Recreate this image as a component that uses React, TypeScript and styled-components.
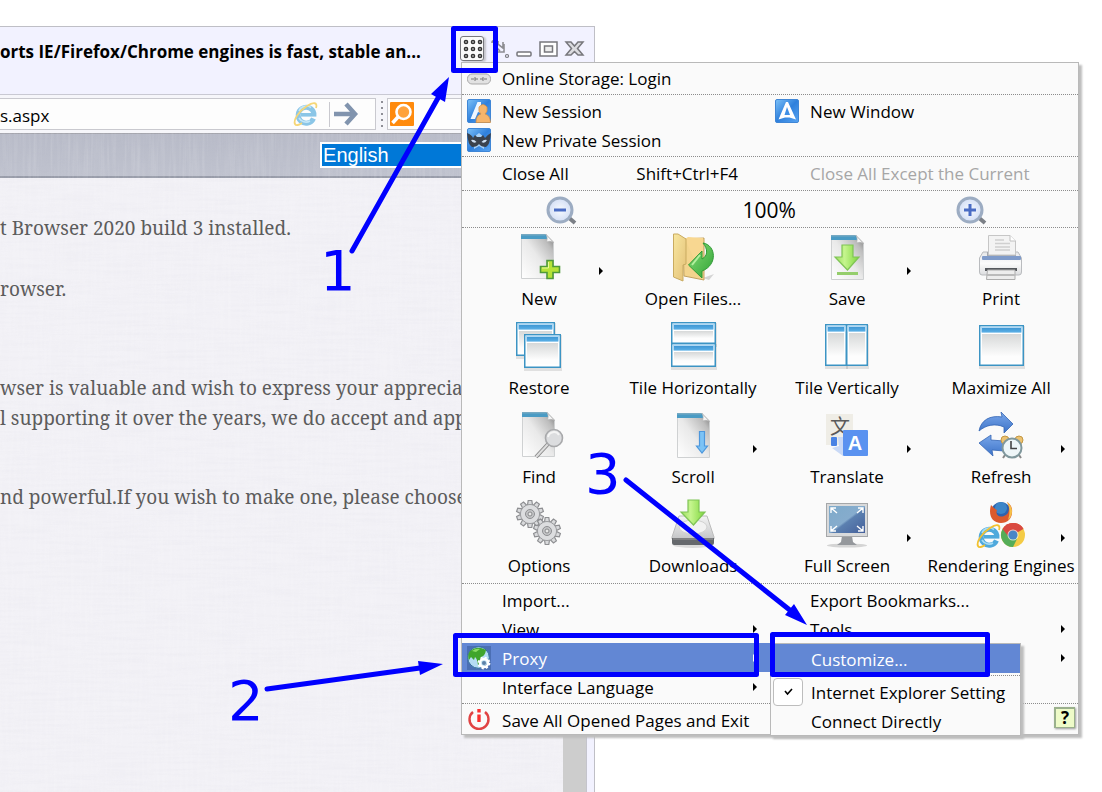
import React from "react";
import styled, { createGlobalStyle, css } from "styled-components";

const GlobalStyle = createGlobalStyle`
  *, *::before, *::after { box-sizing: border-box; }
  body { margin: 0; background: #fff; color: #000; font-family: "Open Sans", "Noto Sans", sans-serif; }
  button { font: inherit; color: inherit; background: none; border: 0; padding: 0; margin: 0; text-align: left; }
  ul { list-style: none; margin: 0; padding: 0; }
  svg { display: block; flex: none; overflow: visible; }
`;

/* ---------- page ---------- */

const Page = styled.div`
  min-height: 100vh;
  padding-top: 26px;
  overflow: hidden;
  display: flex;
`;

const BrowserWindow = styled.div`
  position: relative;
  width: 54%;
  display: flex;
  flex-direction: column;
  border: 1px solid #bfbfc6;
  border-width: 1px 1px 0 0;
  background: #f2f2ff;
`;

const TitleBar = styled.header`
  display: flex;
  align-items: center;
  height: 67px;
  padding: 0 10px 18px 0;
`;

const Title = styled.h1`
  flex: 1;
  margin: 0;
  font-size: 17px;
  line-height: 24px;
  font-weight: 700;
  white-space: nowrap;
`;

const WindowControls = styled.div`
  display: flex;
  align-items: center;
  gap: 7px;
  padding-bottom: 6px;
`;

const GridButton = styled.button`
  width: 24px;
  height: 25px;
  border: 1px solid #77777d;
  border-radius: 3px;
  background: #fafafa;
  box-shadow: 2px 1px 2px #c4c4cc;
`;

const Toolbar = styled.div`
  display: flex;
  align-items: center;
  height: 39px;
  margin-right: 7px;
  border-top: 1px solid #c9c9d3;
  background: #f6f6fa;
`;

const AddressBar = styled.div`
  display: flex;
  align-items: center;
  flex: 0 0 376px;
  height: 32px;
  padding-right: 17px;
  border: 1px solid #c9c9cf;
  border-left: 0;
  background: #fdfdfd;
`;

const AddressInput = styled.input`
  flex: 1;
  min-width: 0;
  border: 0;
  padding: 3px 0 0;
  background: none;
  font: inherit;
  font-size: 17px;
  line-height: 24px;
`;

const Divider = styled.span`
  width: 1px;
  height: 25px;
  margin: 0 4px 0 11px;
  background: #c9c9cf;
`;

const Grip = styled.span`
  width: 2px;
  height: 26px;
  margin: 0 4px 0 5px;
  background: repeating-linear-gradient(#8f8f96 0 2px, transparent 2px 6px);
`;

const SearchBox = styled.div`
  flex: 1;
  height: 32px;
  padding: 3px 2px;
  border: 1px solid #c9c9cf;
  background: #fdfdfd;
`;

const Viewport = styled.div`
  flex: 1;
  display: flex;
  min-height: 0;
  margin-right: 7px;
  border-right: 1px solid #c4c4cc;
`;

const WebPage = styled.main`
  position: relative;
  flex: 1;
  min-width: 0;
  overflow: hidden;
  background-color: #f2f1f6;
`;

/* linen texture that covers the whole page behind its text */
const Linen = styled.svg`
  position: absolute;
  inset: 0;
  pointer-events: none;
`;

const Scrollbar = styled.div`
  flex: 0 0 23px;
  background: #cdcdcd;
`;

const Banner = styled.div`
  display: flex;
  justify-content: flex-end;
  height: 45px;
  padding: 8px 0;
  background: linear-gradient(#b8bbc8, #bfc2ce);
  border-top: 1px solid #a4a5ad;
  border-bottom: 2px solid #989ca9;
`;

const LanguageSelect = styled.select`
  position: relative;
  z-index: 1;
  flex: 0 0 243px;
  height: 26px;
  padding: 0 0 0 1px;
  appearance: none;
  border: 2px solid #fff;
  border-radius: 0;
  background: #0078d7;
  color: #fff;
  font-family: "Liberation Sans", Arial, sans-serif;
  font-size: 20px;
  line-height: 22px;
`;

const Article = styled.article`
  position: relative;
  padding-top: 35px;
  color: #5c5c5c;
  font-family: "Noto Serif", "DejaVu Serif Condensed", "DejaVu Serif", serif;
  font-size: 19px;
  line-height: 30px;
  white-space: nowrap;
`;

const Paragraph = styled.p<{ $gap: number }>`
  margin: 0 0 ${(p) => p.$gap}px;
`;

/* ---------- menu ---------- */

const MenuPanel = styled.nav`
  position: absolute;
  z-index: 1;
  top: 35px;
  left: calc(100% - 133px);
  border: 1px solid #b9b9b9;
  background: #fafafa;
  box-shadow: 3px 3px 2px #bdbdbd;
  font-size: 17px;
  line-height: 24px;
  white-space: nowrap;
`;

const Section = styled.ul<{ $pad?: string; $last?: boolean }>`
  display: grid;
  grid-template-columns: repeat(2, minmax(308px, 1fr));
  padding: ${(p) => p.$pad ?? "1px 0 2px"};
  border-bottom: ${(p) => (p.$last ? "0" : "1px dotted #8c8c8c")};
`;

const Cell = styled.li<{ $start?: boolean }>`
  position: relative;
  ${(p) => p.$start && css`grid-column: 1;`}
`;

const Row = styled.button<{ $active?: boolean }>`
  display: flex;
  align-items: center;
  width: 100%;
  height: 29px;
  padding: 0 13px 0 5px;
  background: ${(p) => (p.$active ? "#6287d4" : "transparent")};
  color: ${(p) => (p.$active ? "#fff" : "#000")};
  &:disabled { color: #a6a6a6; }
`;

const RowIcon = styled.span`
  flex: 0 0 35px;
  display: flex;
`;

const RowLabel = styled.span`
  flex: 1;
  padding-top: 2px;
`;

const Shortcut = styled.span`
  padding: 2px 19px 0 0;
`;

const Triangle = styled.span<{ $light?: boolean }>`
  border: 4px solid transparent;
  border-left: 4px solid ${(p) => (p.$light ? "#fff" : "#000")};
  border-right: 0;
`;

const ZoomRow = styled.div`
  display: flex;
  justify-content: space-between;
  align-items: center;
  height: 37px;
  padding: 2px 92px 0 84px;
  border-bottom: 1px dotted #8c8c8c;
  font-size: 21px;
`;

const ZoomLevel = styled.span`
  padding-left: 6px;
`;

const TileGrid = styled.ul`
  display: grid;
  grid-template-columns: repeat(4, minmax(154px, 1fr));
  grid-template-rows: repeat(3, 89px) 88px;
  border-bottom: 1px dotted #8c8c8c;
`;

const TileCell = styled.li`
  position: relative;
`;

const Tile = styled.button`
  display: flex;
  flex-direction: column;
  align-items: center;
  gap: 5px;
  width: 100%;
  padding-top: 6px;
`;

const TileArrow = styled(Triangle)`
  position: absolute;
  top: 39px;
  right: 13px;
`;

const HelpButton = styled.button`
  width: 21px;
  height: 21px;
  margin: 2px 3px 0 auto;
  display: block;
  border: 1px solid #9ab08c;
  border-width: 2px 1px 1px 2px;
  background: #eefbc8;
  box-shadow: 1px 1px 2px #999;
  text-align: center;
  font-size: 17px;
  font-weight: 700;
  line-height: 18px;
`;

const SubMenu = styled.div`
  position: absolute;
  z-index: 1;
  top: 0;
  left: 100%;
  min-width: 251px;
  border: 1px solid #b9b9b9;
  background: #fafafa;
  box-shadow: 3px 3px 2px #bdbdbd;
`;

const SubList = styled.ul<{ $divided?: boolean }>`
  padding: ${(p) => (p.$divided ? "0 0 2px" : "1px 0 0")};
  border-bottom: ${(p) => (p.$divided ? "1px dotted #8c8c8c" : "0")};
`;

const SubRow = styled(Row)`
  padding-left: 2px;
`;

const CheckSlot = styled.span<{ $checked?: boolean }>`
  flex: 0 0 30px;
  height: 28px;
  margin-right: 8px;
  display: flex;
  align-items: center;
  justify-content: center;
  border-radius: 4px;
  border: 1px solid ${(p) => (p.$checked ? "#bdbdbd" : "transparent")};
  background: ${(p) => (p.$checked ? "#fff" : "transparent")};
`;

/* ---------- annotations ---------- */

const Annotations = styled.svg`
  position: absolute;
  z-index: 2;
  top: -27px;
  left: calc(100% - 594px);
  pointer-events: none;
`;

/* ---------- icons ---------- */

const Defs = () => (
  <svg width="0" height="0" style={{ position: "absolute" }} aria-hidden="true">
    <defs>
      <filter id="weft" x="0" y="0" width="100%" height="100%">
        <feTurbulence type="fractalNoise" baseFrequency="0.02 0.35" numOctaves="2" seed="4" />
        <feColorMatrix values="0 0 0 0 .45  0 0 0 0 .45  0 0 0 0 .55  .9 0 0 0 -.36" />
      </filter>
      <filter id="warp" x="0" y="0" width="100%" height="100%">
        <feTurbulence type="fractalNoise" baseFrequency="0.35 0.02" numOctaves="2" seed="9" />
        <feColorMatrix values="0 0 0 0 1  0 0 0 0 1  0 0 0 0 1  1.8 0 0 0 -.7" />
      </filter>
      <linearGradient id="paper" x1="0" y1="1" x2="1" y2="0">
        <stop offset="0" stopColor="#fff" /><stop offset=".5" stopColor="#e9e9e9" />
        <stop offset=".8" stopColor="#bdbdbd" /><stop offset="1" stopColor="#777" />
      </linearGradient>
      <linearGradient id="pane" x1="0" y1="0" x2="0" y2="1">
        <stop offset="0" stopColor="#d6d8d8" /><stop offset=".8" stopColor="#fdfdfd" />
      </linearGradient>
      <linearGradient id="bar" x1="0" y1="0" x2="0" y2="1">
        <stop offset="0" stopColor="#3f97d4" /><stop offset="1" stopColor="#5bb0e6" />
      </linearGradient>
      <linearGradient id="green" x1="0" y1="0" x2="1" y2="0">
        <stop offset="0" stopColor="#9fdd62" /><stop offset=".4" stopColor="#c5f58e" /><stop offset="1" stopColor="#7ed63c" />
      </linearGradient>
      <linearGradient id="folder" x1="0" y1="0" x2="1" y2="1">
        <stop offset="0" stopColor="#f8e7a0" /><stop offset="1" stopColor="#e3c077" />
      </linearGradient>
      <linearGradient id="return" x1="0" y1="0" x2="1" y2="1">
        <stop offset="0" stopColor="#8ade78" /><stop offset="1" stopColor="#2fa336" />
      </linearGradient>
      <linearGradient id="app" x1="0" y1="0" x2="1" y2="1">
        <stop offset="0" stopColor="#7cc1f8" /><stop offset=".5" stopColor="#2f80dc" /><stop offset="1" stopColor="#58a4f2" />
      </linearGradient>
      <linearGradient id="screen" x1="0" y1="0" x2="1" y2="1">
        <stop offset="0" stopColor="#7eaaca" /><stop offset=".5" stopColor="#86accd" />
        <stop offset=".55" stopColor="#5b80b0" /><stop offset="1" stopColor="#45609a" />
      </linearGradient>
      <linearGradient id="blueArrow" x1="0" y1="0" x2="0" y2="1">
        <stop offset="0" stopColor="#7aa7ea" /><stop offset="1" stopColor="#3c73c8" />
      </linearGradient>
      <linearGradient id="steel" x1="0" y1="0" x2="0" y2="1">
        <stop offset="0" stopColor="#f4f4f4" /><stop offset="1" stopColor="#c4c5c7" />
      </linearGradient>
      <linearGradient id="printer" x1="0" y1="0" x2="0" y2="1">
        <stop offset="0" stopColor="#e6e7e9" /><stop offset=".5" stopColor="#fbfbfb" /><stop offset="1" stopColor="#dcdddf" />
      </linearGradient>
      <radialGradient id="glass"><stop offset="0" stopColor="#f7faff" /><stop offset="1" stopColor="#d3def5" /></radialGradient>
    </defs>
  </svg>
);

const Svg = ({ size = 48, children }: { size?: number; children: React.ReactNode }) => (
  <svg width={size} height={size} viewBox={`0 0 ${size} ${size}`} aria-hidden="true">{children}</svg>
);

const Sheet = ({ x, y }: { x: number; y: number }) => (
  <g transform={`translate(${x} ${y})`}>
    <path d="M.5.5H25L32.500 8V44.500H.5Z" fill="url(#paper)" stroke="#cfd1d2" />
    <path d="M0 0H25L28 5H0Z" fill="#4a9bc4" />
    <path d="M0 0H24V1.500H0Z" fill="#76a9c2" />
    <path d="M24.500 0C27 3 26 6 25.500 8C28 7 31 7 33 9Z" fill="#f6f6f6" stroke="#b4b4b4" strokeWidth=".7" />
  </g>
);

const Win = ({ x, y, w, h }: { x: number; y: number; w: number; h: number }) => (
  <g transform={`translate(${x} ${y})`}>
    <rect x="0" y="1" width={w + 1} height={h + 2} fill="#000" opacity=".1" />
    <rect x=".75" y=".75" width={w - 1.5} height={h - 1.5} fill="#fff" stroke="#3c94c4" strokeWidth="1.500" />
    <rect x="1.500" y="1.500" width={w - 3} height="6" fill="#aed8f4" />
    <rect x="3" y="3" width={w - 6} height="4.500" fill="url(#bar)" />
    <rect x="3" y="9" width={w - 6} height={h - 13} fill="url(#pane)" />
  </g>
);

const GreenArrow = () => (
  <path d="M7 0H18V12H24L12.500 25L0 12H7Z" fill="url(#green)" stroke="#7fc455" strokeWidth="1.200" />
);

const IELogo = ({ cx, cy, r }: { cx: number; cy: number; r: number }) => (
  <g transform={`translate(${cx} ${cy}) scale(${r / 10})`} fill="none">
    <path d="M7.500 4.500A8 8 0 1 1 8 -.5" stroke="#4fa9dc" strokeWidth="5" />
    <path d="M-5 .8H10.400" stroke="#4fa9dc" strokeWidth="3.600" />
    <path d="M-7 -3A8 8 0 0 1 5 -6.500M-7 4A8 8 0 0 0 4 7" stroke="#a7dcf5" strokeWidth="1.600" />
    <path d="M10 -6C12 -12 7 -12 1 -8C-7 -3 -13 6 -11 10C-10 12 -7 11 -4 9" stroke="#f2c230" strokeWidth="1.800" />
  </g>
);

const teeth = [0, 36, 72, 108, 144, 180, 216, 252, 288, 324];
const Gear = ({ cx, cy }: { cx: number; cy: number }) => (
  <g transform={`translate(${cx} ${cy})`}>
    {teeth.map((a) => (
      <path key={a} transform={`rotate(${a})`} d="M-2.500 -9L-1.800 -13.500H1.800L2.500 -9Z" fill="#d9dadc" stroke="#8e8f92" strokeWidth="1.200" />
    ))}
    <circle r="9.500" fill="#d9dadc" stroke="#9b9c9f" />
    <circle r="8.800" fill="#dcdddf" />
    <circle r="4.500" fill="#c3c4c6" stroke="#8e8f92" />
    <circle r="2" fill="#e8e8e8" stroke="#77787b" strokeWidth=".8" />
  </g>
);

const NewIcon = () => (
  <Svg><Sheet x={6} y={0} />
    <path d="M32 26.500H38V32.500H44.500V38.500H38V44.500H32V38.500H25.500V32.500H32Z" fill="#b6e337" stroke="#4f9a3a" strokeWidth="1.600" />
    <path d="M33.500 28V34H27" stroke="#e9fa9a" fill="none" />
  </Svg>
);
const OpenIcon = () => (
  <Svg>
    <path d="M34 44L45 40L40 46Z" fill="#bbb" opacity=".6" />
    <path d="M14 5L35 4V46L15 42Z" fill="#f3d48d" stroke="#c2a260" />
    <path d="M16 5L19 3L34 4V45Z" fill="#f8d791" />
    <path d="M4.500 0H9L17 5V30L14 31V47L4.500 43Z" fill="url(#folder)" stroke="#c9ab61" />
    <path d="M34 9C47 11 49 31 33 37V44L19.500 31L33 17V25C39 22 39 15 34 9Z" fill="url(#return)" stroke="#2f9a35" />
    <path d="M31 21L23 31" stroke="#b4f09f" strokeWidth="2" />
  </Svg>
);
const SaveIcon = () => (
  <Svg><Sheet x={8} y={1} /><g transform="translate(12 11)"><GreenArrow /></g><rect x="14" y="38" width="21" height="3" fill="#95ce6c" /></Svg>
);
const PrintIcon = () => (
  <Svg>
    <path d="M6 18H41L44.500 24V38Q44.500 41 42 41H5Q2.500 41 2.500 38V24Z" fill="url(#printer)" stroke="#b9bbbe" />
    <path d="M10 18H39V22H10Z" fill="#a3a7ad" />
    <path d="M11.500 21V1.500H33L38.500 7V21Z" fill="#f3f3f3" stroke="#c6c6c6" />
    <path d="M33 1.500V7H38.500" fill="#fff" stroke="#c0c0c0" />
    <path d="M18 6H27M18 9.500H33M18 13H33M18 16H33" stroke="#d0d0d0" strokeWidth="1.500" />
    <rect x="5" y="22" width="39" height="4" rx="1" fill="#7f9bca" />
    <rect x="8" y="34" width="32" height="3" fill="#55585c" />
    <path d="M10.500 36H38V45.500H9.500Z" fill="#ededed" stroke="#adadad" />
    <path d="M10 41H38" stroke="#bbb" strokeWidth="2" />
  </Svg>
);
const RestoreIcon = () => (<Svg><Win x={1} y={-1} w={39} h={34} /><Win x={9} y={11} w={37} h={34} /></Svg>);
const TileHIcon = () => (<Svg><Win x={2} y={-1} w={45} h={22} /><Win x={2} y={20} w={45} h={24} /></Svg>);
const TileVIcon = () => (<Svg><Win x={2} y={1} w={22} h={42} /><Win x={23} y={1} w={22} h={42} /></Svg>);
const MaxIcon = () => (<Svg><Win x={2} y={2} w={45} h={41} /></Svg>);
const FindIcon = () => (
  <Svg><Sheet x={7} y={0} />
    <path d="M34 31L21 45" stroke="#8a8a8a" strokeWidth="4" />
    <path d="M34 31L21 45" stroke="#dedede" strokeWidth="2" />
    <circle cx="39" cy="26" r="8.500" fill="#dcdddf" stroke="#a8a9ab" strokeWidth="1.600" />
    <path d="M33 25A6 6 0 0 1 44 23" stroke="#f4f4f4" strokeWidth="2" fill="none" />
  </Svg>
);
const ScrollIcon = () => (
  <Svg><Sheet x={8} y={1} />
    <path d="M30.500 19.500H35.500V34H38.500L33 41L27.500 34H30.500Z" fill="#7cc3f5" stroke="#4d97dc" strokeWidth="1.200" />
  </Svg>
);
const TranslateIcon = () => (
  <Svg>
    <path d="M3 2H30V18L20 33H3Z" fill="#efede6" />
    <text x="17" y="22" fontSize="20" fill="#5a5a5a" textAnchor="middle" fontFamily="Noto Sans CJK SC, sans-serif">文</text>
    <path d="M15 25H20V44L9 36L16 34Z" fill="#c9d9f6" />
    <rect x="8" y="25" width="6" height="9" rx="1" fill="#4a83e4" />
    <rect x="20" y="18" width="25" height="26" rx="1" fill="#5a92f0" />
    <text x="32" y="38" fontSize="20" fontWeight="700" fill="#fff" textAnchor="middle" fontFamily="Liberation Sans, sans-serif">A</text>
  </Svg>
);
const RefreshIcon = () => (
  <Svg>
    <path d="M2 19C4 8 13 3 25 5L24 0L36 12L27 21L27 15C18 11 9 13 2 19Z" fill="url(#blueArrow)" stroke="#3566b4" strokeWidth=".8" />
    <path d="M2 31L14 23L14 28L27 29V39L15 38L16 44Z" fill="url(#blueArrow)" stroke="#3566b4" strokeWidth=".8" />
    <circle cx="28" cy="28" r="4" fill="#ecc271" stroke="#c39743" />
    <circle cx="42" cy="28" r="4" fill="#ecc271" stroke="#c39743" />
    <path d="M28 43L26 46M42 43L44 46" stroke="#888" strokeWidth="2" />
    <circle cx="35" cy="36" r="9.500" fill="#eef6f8" stroke="#7f979c" strokeWidth="2" />
    <path d="M34 29V36.500H40" stroke="#444" strokeWidth="1.600" fill="none" />
  </Svg>
);
const OptionsIcon = () => (<Svg><Gear cx={15} cy={13} /><Gear cx={32} cy={30} /></Svg>);
const DownloadsIcon = () => (
  <Svg>
    <ellipse cx="24" cy="44" rx="20" ry="3" fill="#000" opacity=".12" />
    <path d="M10 15H38L45 36V38H3V36Z" fill="url(#steel)" stroke="#bcbcbc" />
    <ellipse cx="24" cy="26" rx="14" ry="7" fill="#f2f2f2" stroke="#d2d2d2" />
    <path d="M3 37H45V42Q45 44 43 44H5Q3 44 3 42Z" fill="#66696d" />
    <path d="M4 38H44" stroke="#999" />
    <g transform="translate(12 -1)"><GreenArrow /></g>
  </Svg>
);
const FullScreenIcon = () => (
  <Svg>
    <ellipse cx="24" cy="44.500" rx="20" ry="2" fill="#000" opacity=".15" />
    <path d="M19 35H29L30 41L34 44H14L18 41Z" fill="#95989c" />
    <rect x="3.500" y="2.500" width="41" height="33" fill="#d9dadb" stroke="#a5a7a9" />
    <rect x="6" y="5" width="36" height="27" fill="url(#screen)" />
    <path d="M8 12V7H13M8 7L14 12M40 12V7H35M40 7L34 12M8 25V30H13M8 30L14 25M40 25V30H35M40 30L34 25" stroke="#fff" strokeWidth="1.400" fill="none" />
  </Svg>
);
const EnginesIcon = () => (
  <Svg>
    <circle cx="24" cy="11" r="10" fill="#2f63ad" />
    <circle cx="24" cy="7" r="6" fill="#3d86c8" />
    <path d="M14 4C11 14 15 22 24 22C31 22 36 17 35 8C34 4 32 2 30 1C33 6 33 13 27 15C22 17 18 13 20 9C18 8 16 6 14 4Z" fill="#dc5a2b" />
    <path d="M30 1C36 5 37 14 31 19C33 13 33 6 30 1Z" fill="#f5c04a" />
    <circle cx="36" cy="34" r="12" fill="#f4cb45" />
    <path d="M36 34L25.600 28A12 12 0 0 1 46.400 28Z" fill="#d94a41" />
    <path d="M36 34L25.600 28A12 12 0 0 0 36 46L40 38Z" fill="#55ad58" />
    <path d="M36 28H46.400A12 12 0 0 0 25.600 28L31 35Z" fill="#d94a41" />
    <circle cx="36" cy="34" r="5.500" fill="#fff" opacity=".7" />
    <circle cx="36" cy="34" r="4.600" fill="#4a86c8" />
    <IELogo cx={12} cy={35} r={10} />
  </Svg>
);

const AppTile = ({ children }: { children?: React.ReactNode }) => (
  <Svg size={24}>
    <rect x=".5" y=".5" width="23" height="23" rx="1.500" fill="url(#app)" stroke="#3f86d6" />
    {children}
  </Svg>
);
const WindowTileIcon = () => (
  <AppTile>
    <path d="M11 3H13L21 20.500L14.500 18.500H10L3.500 20.500Z" fill="#fff" />
    <path d="M12 8L15 16H9.500Z" fill="#3f8fe6" />
  </AppTile>
);
const SessionIcon = () => (
  <AppTile>
    <path d="M3.500 20L10.500 3H14L14 14L11 13L8 20Z" fill="#eef6ff" />
    <path d="M9 23.500Q9 16 14 15Q11 13 12 8Q16 3 20 8Q21 13 18 15Q23 16 23.500 23.500Z" fill="#f5b56b" stroke="#d98f3f" strokeWidth=".7" />
  </AppTile>
);
const PrivateIcon = () => (
  <AppTile>
    <path d="M7 9L12 5L17 9V21L12 18L7 21Z" fill="#a9d2f7" />
    <path d="M0 5Q5 7 6 10L8 7L10 9H14L16 7L18 10Q20 7 24 5Q23 17 19 19Q14 19 12 16Q10 19 5 19Q1 17 0 5Z" fill="#3a424d" />
    <path d="M4 12Q7 11 9.500 14Q6 16 4 12ZM20 12Q17 11 14.500 14Q18 16 20 12Z" fill="#cfe0f2" />
  </AppTile>
);
const StorageIcon = () => (
  <Svg size={24}>
    <path d="M5 5Q9 2 12 5H20V8H4Z" fill="#e3e3e6" />
    <rect x=".5" y="8" width="23" height="10" rx="4.500" fill="#e2e2e2" stroke="#a9a9a9" />
    <path d="M4 13H7M8 13H11M13 13H16M17 13H20M8 11V15M16 11V15" stroke="#777" />
  </Svg>
);
const ProxyIcon = () => (
  <Svg size={24}>
    <rect width="24" height="24" fill="#4b6fb4" />
    <circle cx="11.500" cy="11.500" r="10.800" fill="#b5dcf3" stroke="#316d9b" />
    <path d="M3 5Q10 -1 19 4Q18 10 14 11Q16 16 11 19Q10 12 8 11L7 14L4 11L2 14Q0 9 3 5Z" fill="#3fa52c" />
    <path d="M5 5Q9 2 13 3L9 6Z" fill="#8bdc66" />
    <circle cx="17" cy="17" r="4" fill="none" stroke="#fff" strokeWidth="2.600" />
    <circle cx="17" cy="17" r="5.600" fill="none" stroke="#fff" strokeWidth="1.600" strokeDasharray="2.200 2.200" />
    <circle cx="17" cy="17" r="2" fill="#5d81a8" />
  </Svg>
);
const ExitIcon = () => (
  <Svg size={24}>
    <path d="M6 4A9.500 9.500 0 1 0 18 4" fill="none" stroke="#e04343" strokeWidth="2.400" />
    <path d="M12 1V4.500M12 6.500V14" stroke="#fb2f2f" strokeWidth="3.400" />
  </Svg>
);
const ZoomIcon = ({ plus }: { plus?: boolean }) => (
  <svg width="30" height="28" viewBox="0 0 30 28" aria-hidden="true">
    <path d="M22 21L29 27" stroke="#7b7f86" strokeWidth="4" />
    <circle cx="14" cy="14" r="12" fill="url(#glass)" stroke="#9cacc2" strokeWidth="3" />
    <path d={plus ? "M8 14H20M14 8V20" : "M8 14H20"} stroke="#4a6cc4" strokeWidth="3" />
  </svg>
);

const gridDots = [4, 11, 18];

/* ---------- menu content ---------- */

const tiles: { label: string; icon: React.ReactNode; arrow?: boolean }[] = [
  { label: "New", icon: <NewIcon />, arrow: true },
  { label: "Open Files...", icon: <OpenIcon /> },
  { label: "Save", icon: <SaveIcon />, arrow: true },
  { label: "Print", icon: <PrintIcon /> },
  { label: "Restore", icon: <RestoreIcon /> },
  { label: "Tile Horizontally", icon: <TileHIcon /> },
  { label: "Tile Vertically", icon: <TileVIcon /> },
  { label: "Maximize All", icon: <MaxIcon /> },
  { label: "Find", icon: <FindIcon /> },
  { label: "Scroll", icon: <ScrollIcon />, arrow: true },
  { label: "Translate", icon: <TranslateIcon />, arrow: true },
  { label: "Refresh", icon: <RefreshIcon />, arrow: true },
  { label: "Options", icon: <OptionsIcon /> },
  { label: "Downloads", icon: <DownloadsIcon /> },
  { label: "Full Screen", icon: <FullScreenIcon />, arrow: true },
  { label: "Rendering Engines", icon: <EnginesIcon />, arrow: true },
];

type ItemProps = {
  label: string;
  icon?: React.ReactNode;
  shortcut?: string;
  arrow?: boolean;
  active?: boolean;
  disabled?: boolean;
  start?: boolean;
  children?: React.ReactNode;
};

const Item = ({ label, icon, shortcut, arrow, active, disabled, start, children }: ItemProps) => (
  <Cell $start={start}>
    <Row type="button" $active={active} disabled={disabled}>
      <RowIcon>{icon}</RowIcon>
      <RowLabel>{label}</RowLabel>
      {shortcut && <Shortcut>{shortcut}</Shortcut>}
      {arrow && <Triangle $light={active} />}
    </Row>
    {children}
  </Cell>
);

const Menu = () => (
  <MenuPanel aria-label="Main menu">
    <Section $pad="0 0 2px">
      <Item label="Online Storage: Login" icon={<StorageIcon />} />
    </Section>
    <Section>
      <Item label="New Session" icon={<SessionIcon />} />
      <Item label="New Window" icon={<WindowTileIcon />} />
      <Item label="New Private Session" icon={<PrivateIcon />} start />
    </Section>
    <Section $pad="1px 0 3px">
      <Item label="Close All" shortcut="Shift+Ctrl+F4" />
      <Item label="Close All Except the Current" disabled />
    </Section>
    <ZoomRow>
      <button type="button" aria-label="Zoom out"><ZoomIcon /></button>
      <ZoomLevel>100%</ZoomLevel>
      <button type="button" aria-label="Zoom in"><ZoomIcon plus /></button>
    </ZoomRow>
    <TileGrid>
      {tiles.map((t) => (
        <TileCell key={t.label}>
          <Tile type="button">{t.icon}<span>{t.label}</span></Tile>
          {t.arrow && <TileArrow />}
        </TileCell>
      ))}
    </TileGrid>
    <Section>
      <Item label="Import..." />
      <Item label="Export Bookmarks..." />
      <Item label="View" arrow />
      <Item label="Tools" arrow />
      <Item label="Proxy" icon={<ProxyIcon />} arrow active>
        <SubMenu>
          <SubList $divided>
            <li><SubRow type="button" $active><CheckSlot /><RowLabel>Customize...</RowLabel></SubRow></li>
          </SubList>
          <SubList>
            <li>
              <SubRow type="button">
                <CheckSlot $checked>
                  <svg width="9" height="8" viewBox="0 0 9 8" aria-hidden="true">
                    <path d="M1 3L3.500 6L8 1" fill="none" stroke="#000" strokeWidth="1.600" />
                  </svg>
                </CheckSlot>
                <RowLabel>Internet Explorer Setting</RowLabel>
              </SubRow>
            </li>
            <li><SubRow type="button"><CheckSlot /><RowLabel>Connect Directly</RowLabel></SubRow></li>
          </SubList>
        </SubMenu>
      </Item>
      <Item label="" arrow />
      <Item label="Interface Language" arrow />
    </Section>
    <Section $pad="1px 0 0" $last>
      <Item label="Save All Opened Pages and Exit" icon={<ExitIcon />} />
      <Cell><HelpButton type="button">?</HelpButton></Cell>
    </Section>
  </MenuPanel>
);

const Steps = () => (
  <Annotations width="1102" height="792" viewBox="0 0 1102 792" aria-hidden="true">
    <g fill="none" stroke="#0000ff" strokeWidth="5" strokeLinejoin="round" strokeLinecap="round">
      <rect x="453.500" y="28.500" width="42" height="42" />
      <rect x="455.500" y="635.500" width="301" height="39" />
      <rect x="772.500" y="634.500" width="215" height="40" />
      <path d="M352 251L438 98M267 689L420 668M626 480L791 611" />
    </g>
    <path d="M449 77L431 94L445 102ZM443 664L418 661L420 675ZM807 625L794 604L785 615Z" fill="#0000ff" />
    <g fill="#0000ff" fontFamily="DejaVu Sans, sans-serif" fontSize="56">
      <text x="320" y="290">1</text>
      <text x="228" y="720">2</text>
      <text x="585" y="493">3</text>
    </g>
  </Annotations>
);

export default function App() {
  return (
    <Page>
      <GlobalStyle />
      <Defs />
      <BrowserWindow>
        <TitleBar>
          <Title>orts IE/Firefox/Chrome engines is fast, stable an...</Title>
          <WindowControls>
            <GridButton type="button" aria-label="Menu">
              <svg width="22" height="23" viewBox="0 0 22 23">
                {gridDots.map((y) => gridDots.map((x) => (
                  <circle key={`${x}-${y}`} cx={x + 1} cy={y + 1} r="1.600" fill="#aaa" stroke="#333" strokeWidth="1.400" />
                )))}
              </svg>
            </GridButton>
            <button type="button" aria-label="Tools">
              <svg width="18" height="20" viewBox="0 0 18 20">
                <path d="M1 4Q1 1 4 2M3 6L9 12M7 2V5L12 9V3M13 5V13H6" fill="none" stroke="#8d8d92" strokeWidth="1.600" />
                <circle cx="16" cy="17" r="1.500" fill="none" stroke="#77777c" strokeWidth="1.200" />
              </svg>
            </button>
            <button type="button" aria-label="Minimize">
              <svg width="16" height="20" viewBox="0 0 16 20">
                <rect x="1" y="13" width="14" height="4" rx="1" fill="#fff" stroke="#77777c" strokeWidth="1.500" />
              </svg>
            </button>
            <button type="button" aria-label="Restore window">
              <svg width="19" height="20" viewBox="0 0 19 20">
                <rect x="1" y="3" width="17" height="14" fill="#fff" stroke="#77777c" strokeWidth="1.500" />
                <rect x="5.500" y="7" width="8" height="6" fill="#eee" stroke="#77777c" strokeWidth="1.500" />
              </svg>
            </button>
            <button type="button" aria-label="Close">
              <svg width="19" height="20" viewBox="0 0 19 20">
                <path d="M1 3H6L9.500 7L13 3H18L12.500 9.500L18 16H13L9.500 12.500L6 16H1L6.500 9.500Z" fill="#dcdce0" stroke="#77777c" strokeWidth="1.500" />
              </svg>
            </button>
          </WindowControls>
        </TitleBar>
        <Toolbar>
          <AddressBar>
            <AddressInput aria-label="Address" defaultValue="s.aspx" />
            <svg width="24" height="24" viewBox="0 0 24 24" opacity=".65" aria-hidden="true"><IELogo cx={12} cy={12} r={10} /></svg>
            <Divider />
            <button type="button" aria-label="Go">
              <svg width="24" height="24" viewBox="0 0 24 24">
                <path d="M0 12H20M12 2L21 12L12 22" fill="none" stroke="#8194ae" strokeWidth="4.500" />
              </svg>
            </button>
          </AddressBar>
          <Grip />
          <SearchBox>
            <svg width="24" height="24" viewBox="0 0 24 24" aria-hidden="true">
              <rect width="24" height="24" rx="1" fill="#ff8a0c" />
              <circle cx="13.500" cy="10" r="7" fill="#ffa23b" stroke="#fff" strokeWidth="2.600" />
              <path d="M8 15L2.500 21" stroke="#fff" strokeWidth="3.600" />
            </svg>
          </SearchBox>
        </Toolbar>
        <Viewport>
          <WebPage>
            <Banner>
              <LanguageSelect aria-label="Language" defaultValue="English">
                <option>English</option>
              </LanguageSelect>
            </Banner>
            <Linen width="100%" height="100%" aria-hidden="true">
              <rect width="100%" height="100%" filter="url(#weft)" opacity=".12" />
              <rect width="100%" height="100%" filter="url(#warp)" opacity=".14" />
            </Linen>
            <Article>
              <Paragraph $gap={31}>t Browser 2020 build 3 installed.</Paragraph>
              <Paragraph $gap={69}>rowser.</Paragraph>
              <Paragraph $gap={49}>
                wser is valuable and wish to express your appreciation<br />
                l supporting it over the years, we do accept and appreciate
              </Paragraph>
              <Paragraph $gap={0}>nd powerful.If you wish to make one, please choose</Paragraph>
            </Article>
          </WebPage>
          <Scrollbar />
        </Viewport>
        <Menu />
        <Steps />
      </BrowserWindow>
    </Page>
  );
}
